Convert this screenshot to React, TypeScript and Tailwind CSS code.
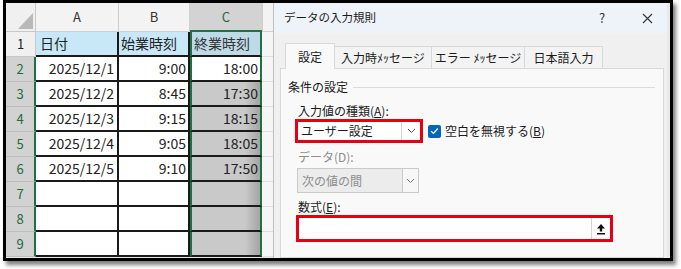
const jp = "font-['Noto_Sans_CJK_JP','Noto_Sans',sans-serif]";

const rows = [
    { n: 2, a: '2025/12/1', b: '9:00', c: '18:00' },
    { n: 3, a: '2025/12/2', b: '8:45', c: '17:30' },
    { n: 4, a: '2025/12/3', b: '9:15', c: '18:15' },
    { n: 5, a: '2025/12/4', b: '9:05', c: '18:05' },
    { n: 6, a: '2025/12/5', b: '9:10', c: '17:50' },
    { n: 7, a: '', b: '', c: '' },
    { n: 8, a: '', b: '', c: '' },
    { n: 9, a: '', b: '', c: '' },
];

const Chevron = ({ color = '#555' }: { color?: string }) => (
    <svg width="9" height="6" viewBox="0 0 9 6">
        <polyline points="1,1 4.5,4.5 8,1" fill="none" stroke={color} strokeWidth="1" />
    </svg>
);

const Sheet = () => (
    <div className={`w-[267px] h-full flex flex-col ${jp}`}>
        {/* column headers */}
        <div className="flex h-[29px] shrink-0">
            <div className="w-[30px] bg-[#f0f0f0] border-r border-b border-[#c8c8c8]">
                <svg width="30" height="28" viewBox="0 0 30 28">
                    <polygon points="27,10 27,26 12,26" fill="#b9b9b9" />
                </svg>
            </div>
            <div className="w-[83px] bg-[#f3f3f3] border-r border-b border-[#cfcfcf] flex items-center justify-center text-[13px] text-[#333]">A</div>
            <div className="w-[71px] bg-[#f3f3f3] border-r border-b border-[#cfcfcf] flex items-center justify-center text-[13px] text-[#333]">B</div>
            <div className="w-[72px] bg-[#d3d3d3] border-b-2 border-[#1e7145] flex items-center justify-center text-[13px] text-[#1e6b3c]">C</div>
            <div className="w-[11px] bg-[#f3f3f3] border-l border-b border-[#cfcfcf]" />
        </div>

        {/* row 1 */}
        <div className="flex h-[25px] shrink-0 text-[14px] text-[#222]">
            <div className="w-[30px] bg-[#f0f0f0] border-r border-b border-[#c8c8c8] flex items-center justify-center text-[13px]">1</div>
            <div className="w-[83px] bg-[#c9e8f7] border-r-2 border-b-2 border-[#1a1a1a] flex items-center pl-[4px]">日付</div>
            <div className="w-[71px] bg-[#c9e8f7] border-r-2 border-b-2 border-[#1a1a1a] flex items-center pl-[2px]">始業時刻</div>
            <div className="w-[72px] bg-[#bfdae7] border-x-2 border-x-[#1e7145] border-b-2 border-b-[#1a1a1a] flex items-center pl-[2px] text-[#333]">終業時刻</div>
            <div className="w-[11px] bg-[#f5f5f5] border-b border-[#dedede]" />
        </div>

        {rows.map((r) => (
            <div key={r.n} className="flex h-[25px] shrink-0 text-[14px] text-[#222]">
                <div className="w-[30px] bg-[#d2d2d2] border-r-2 border-r-[#1e7145] border-b border-b-[#bdbdbd] flex items-center justify-center text-[13px] text-[#1e6b3c]">{r.n}</div>
                <div className="w-[83px] bg-white border-r-2 border-b-2 border-[#1a1a1a] flex items-center justify-end pr-[3px]">{r.a}</div>
                <div className="w-[71px] bg-white border-r-2 border-b-2 border-[#1a1a1a] flex items-center justify-end pr-[2px]">{r.b}</div>
                <div
                    className={`w-[72px] border-x-2 border-x-[#1e7145] border-b-2 border-b-[#1a1a1a] flex items-center justify-end pr-[2px] ${
                        r.n === 2 ? 'bg-white' : 'bg-[linear-gradient(to_right,#c9c9c9_78%,#a4a4a4)]'
                    }`}
                >
                    {r.c}
                </div>
                <div className="w-[11px] bg-[#f5f5f5] border-b border-[#dedede]" />
            </div>
        ))}
    </div>
);

const Dialog = () => (
    <div className={`w-[394px] h-full flex flex-col border-l border-[#bdbdbd] ${jp} text-[12px] text-[#1a1a1a]`}>
        {/* title bar */}
        <div className="h-[30px] shrink-0 bg-[#eef3f9] flex items-center pl-[10px]">
            <span className="text-[11.5px]">データの入力規則</span>
            <div className="flex-1" />
            <span className="w-[20px] text-center text-[13px] text-[#333]">?</span>
            <div className="w-[20px] ml-[25px] mr-[10px] flex justify-center">
                <svg width="11" height="11" viewBox="0 0 11 11">
                    <path d="M1 1 L10 10 M10 1 L1 10" stroke="#333" strokeWidth="1.1" />
                </svg>
            </div>
        </div>

        {/* body */}
        <div className="flex-1 bg-[#f0f0f0] pl-[6px] pt-[10px] flex flex-col overflow-hidden">
            <div className="flex items-end h-[25px] ml-[5px] shrink-0">
                <div className="relative z-10 -mb-px w-[50px] h-[26px] bg-[#f9f9f9] border border-b-0 border-[#d9d9d9] flex items-center justify-center">設定</div>
                <div className="w-[97px] h-[22px] bg-[#f3f3f3] border border-b-0 border-l-0 border-[#d9d9d9] flex items-center justify-center">入力時ﾒｯセージ</div>
                <div className="w-[93px] h-[22px] bg-[#f3f3f3] border border-b-0 border-l-0 border-[#d9d9d9] flex items-center justify-center">エラー ﾒｯセージ</div>
                <div className="w-[78px] h-[22px] bg-[#f3f3f3] border border-b-0 border-l-0 border-[#d9d9d9] flex items-center justify-center">日本語入力</div>
            </div>

            <div className="w-[384px] flex-1 bg-[#f9f9f9] border border-[#d9d9d9] pl-[7px]">
                <div className="mt-[10px] h-[16px] flex items-center">
                    <span>条件の設定</span>
                    <div className="flex-1 h-px bg-[#dcdcdc] ml-[5px] mr-[8px]" />
                </div>

                <div className="ml-[7px]">
                    <div className="mt-[8px] h-[16px] flex items-center pl-[3px]">
                        入力値の種類(<span className="underline">A</span>):
                    </div>
                    <div className="flex items-center">
                        <div className="w-[128px] h-[24px] border-[3px] border-[#e60012] bg-white flex">
                            <div className="flex-1 flex items-center pl-[3px]">ユーザー設定</div>
                            <div className="w-[19px] border-l border-[#d4d4d4] flex items-center justify-center">
                                <Chevron />
                            </div>
                        </div>
                        <div className="ml-[5px] w-[13px] h-[13px] rounded-[2px] bg-[#0067c0] flex items-center justify-center">
                            <svg width="9" height="8" viewBox="0 0 9 8">
                                <polyline points="1.2,4.2 3.5,6.4 7.8,1.5" fill="none" stroke="white" strokeWidth="1.3" />
                            </svg>
                        </div>
                        <span className="ml-[4px]">
                            空白を無視する(<span className="underline">B</span>)
                        </span>
                    </div>

                    <div className="mt-[6px] h-[16px] flex items-center pl-[3px] text-[#8c8c8c]">データ(D):</div>
                    <div className="mt-[3px] ml-[2px] w-[122px] h-[25px] bg-[#ececec] border border-[#cacaca] flex">
                        <div className="flex-1 flex items-center pl-[4px] text-[#8c8c8c]">次の値の間</div>
                        <div className="w-[16px] bg-[#f7f7f7] border-l border-[#cacaca] flex items-center justify-center">
                            <Chevron color="#777" />
                        </div>
                    </div>

                    <div className="mt-[6px] h-[16px] flex items-center pl-[3px]">
                        数式(<span className="underline">E</span>):
                    </div>
                    <div className="ml-[1px] w-[317px] h-[27px] border-[3px] border-[#e60012] bg-white flex">
                        <div className="flex-1" />
                        <div className="w-[19px] border-l border-[#d4d4d4] flex items-center justify-center">
                            <svg width="10" height="12" viewBox="0 0 10 12">
                                <path d="M5 1 L9 5.6 H6.2 V8.6 H3.8 V5.6 H1 Z" fill="#111" />
                                <rect x="1" y="10" width="8" height="1.5" fill="#111" />
                            </svg>
                        </div>
                    </div>
                </div>
            </div>
        </div>
    </div>
);

export default function App() {
    return (
        <div className="w-[681px] h-[269px] bg-white pl-[3px]">
            <div className="w-[670px] h-[261px] border-[3px] border-black shadow-[3px_4px_4px_rgba(0,0,0,0.5)] flex overflow-hidden bg-[#e9e9e9]">
                <Sheet />
                <Dialog />
            </div>
        </div>
    );
}
